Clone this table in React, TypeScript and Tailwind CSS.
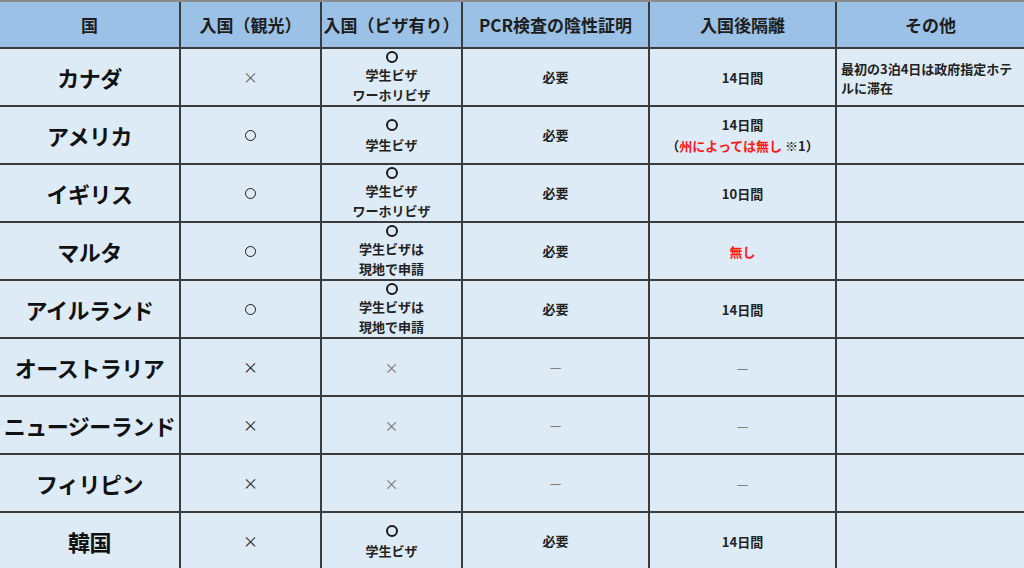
const font = "font-['Noto_Sans_CJK_JP','Noto_Sans',sans-serif]";

type Row = {
  country: string;
  tourist: "o" | "x" | "xg";
  visa: string[] | "x";
  pcr: string;
  quarantine: React.ReactNode;
  other?: string;
};

const Circle = ({ big = false }: { big?: boolean }) => (
  <span
    className={
      big
        ? "inline-block w-[12px] h-[12px] rounded-full border-2 border-[#1a1a1a]"
        : "inline-block w-[11px] h-[11px] rounded-full border-[1.5px] border-[#1a1a1a]"
    }
  />
);

const rows: Row[] = [
  { country: "カナダ", tourist: "xg", visa: ["学生ビザ", "ワーホリビザ"], pcr: "必要", quarantine: "14日間", other: "最初の3泊4日は政府指定ホテルに滞在" },
  {
    country: "アメリカ",
    tourist: "o",
    visa: ["学生ビザ"],
    pcr: "必要",
    quarantine: (
      <>
        <div>14日間</div>
        <div>
          （<span className="text-[#ff1a1a]">州によっては無し</span> ※1）
        </div>
      </>
    ),
  },
  { country: "イギリス", tourist: "o", visa: ["学生ビザ", "ワーホリビザ"], pcr: "必要", quarantine: "10日間" },
  { country: "マルタ", tourist: "o", visa: ["学生ビザは", "現地で申請"], pcr: "必要", quarantine: <span className="text-[#ff1a1a]">無し</span> },
  { country: "アイルランド", tourist: "o", visa: ["学生ビザは", "現地で申請"], pcr: "必要", quarantine: "14日間" },
  { country: "オーストラリア", tourist: "x", visa: "x", pcr: "—", quarantine: "—" },
  { country: "ニュージーランド", tourist: "x", visa: "x", pcr: "—", quarantine: "—" },
  { country: "フィリピン", tourist: "x", visa: "x", pcr: "—", quarantine: "—" },
  { country: "韓国", tourist: "x", visa: ["学生ビザ"], pcr: "必要", quarantine: "14日間" },
];

const headers = ["国", "入国（観光）", "入国（ビザ有り）", "PCR検査の陰性証明", "入国後隔離", "その他"];

const Cell = ({ children, className = "" }: { children?: React.ReactNode; className?: string }) => (
  <div className={`bg-[#ddebf7] flex flex-col items-center justify-center text-center overflow-hidden ${className}`}>
    {children}
  </div>
);

export default function App() {
  return (
    <div className={`w-[1024px] h-[568px] overflow-hidden bg-[#3c3c3c] border-t-2 border-[#8a8a8a] ${font}`}>
      <div className="grid grid-cols-[179px_139px_139px_185px_185px_1fr] grid-rows-[45px] auto-rows-[56px] gap-[2px]">
        {headers.map((h) => (
          <div key={h} className="bg-[#9bc2e6] flex items-center justify-center text-[17px] font-bold text-[#1e1e1e] whitespace-nowrap">
            {h}
          </div>
        ))}
        {rows.map((r) => (
          <div key={r.country} className="contents">
            <Cell>
              <span className="text-[22px] font-bold text-[#111] whitespace-nowrap tracking-[-0.5px]">{r.country}</span>
            </Cell>
            <Cell>
              {r.tourist === "o" ? (
                <Circle />
              ) : (
                <span className={`text-[15px] ${r.tourist === "xg" ? "text-[#666]" : "text-[#222]"}`}>×</span>
              )}
            </Cell>
            <Cell className="text-[13px] font-bold text-[#222] leading-[20px]">
              {r.visa === "x" ? (
                <span className="text-[14px] font-normal text-[#777]">×</span>
              ) : (
                <>
                  <div className="h-[20px] flex items-center justify-center">
                    <Circle big />
                  </div>
                  {r.visa.map((v) => (
                    <div key={v}>{v}</div>
                  ))}
                </>
              )}
            </Cell>
            <Cell className={`text-[13px] font-bold ${r.pcr === "—" ? "text-[#666] font-normal" : "text-[#222]"}`}>
              {r.pcr}
            </Cell>
            <Cell className={`text-[13px] font-bold leading-[21px] ${r.quarantine === "—" ? "text-[#666] font-normal" : "text-[#222]"}`}>
              {r.quarantine}
            </Cell>
            <div className="bg-[#ddebf7] pl-[4px] pr-[2px] pt-[10px] text-[13px] font-bold leading-[19px] text-[#222] text-left">
              {r.other}
            </div>
          </div>
        ))}
      </div>
    </div>
  );
}
